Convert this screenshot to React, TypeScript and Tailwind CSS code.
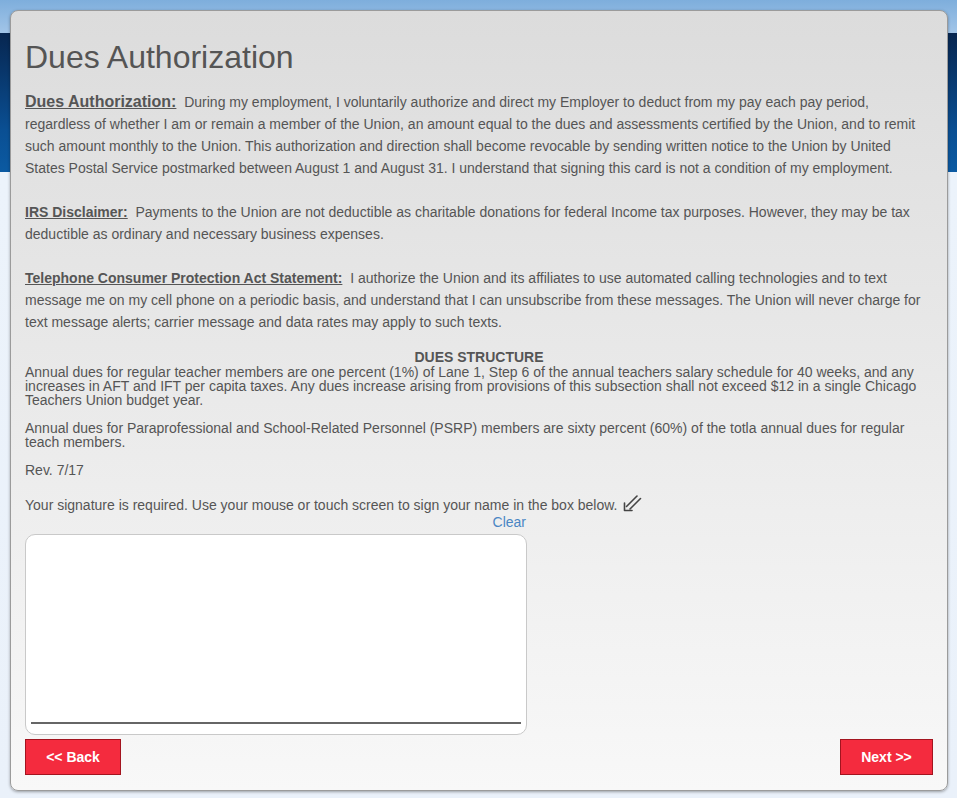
import React from "react";

const font = { fontFamily: '"Liberation Sans", Arial, sans-serif' };

const SignArrow = () => (
  <svg width="20" height="19" viewBox="0 0 20 19" className="ml-[5px] inline-block align-[-3px]" fill="none" stroke="#444" strokeWidth="1.6" strokeLinecap="round" strokeLinejoin="round">
    <path d="M2.5 9 V16.5 H10" />
    <path d="M4.5 12.5 L15 2" />
    <path d="M8 15 L18.5 4.5" />
  </svg>
);

export default function App() {
  return (
    <div
      style={font}
      className="min-h-[798px] w-full bg-[linear-gradient(to_bottom,#7eaedc_0px,#a2c5e8_33px,#072650_33px,#0a4f93_130px,#0b5aa2_172px,#ecf3fb_172px,#eaf1fa_100%)] pt-[10px] pb-[8px]"
    >
      <div className="ml-[10px] w-[938px] rounded-[8px] border border-[#9b9b9b] bg-[linear-gradient(to_bottom,#dcdcdc,#f8f8f8)] px-[14px] pt-[29px] pb-[15px] text-[#555] shadow-[0_1px_3px_rgba(0,0,0,0.35)]">
        <h1 className="text-[32px] leading-[35px] font-normal text-[#555]">Dues Authorization</h1>

        <div className="mt-[16px] text-[14px] leading-[22px]">
          <p>
            <span className="text-[16px] font-bold underline">Dues Authorization:</span>&nbsp; During my employment, I voluntarily authorize and direct my Employer to deduct from my pay each pay period, regardless of whether I am or remain a member of the Union, an amount equal to the dues and assessments certified by the Union, and to remit such amount monthly to the Union. This authorization and direction shall become revocable by sending written notice to the Union by United States Postal Service postmarked between August 1 and August 31. I understand that signing this card is not a condition of my employment.
          </p>
          <p className="mt-[22px]">
            <span className="font-bold underline">IRS Disclaimer:</span>&nbsp; Payments to the Union are not deductible as charitable donations for federal Income tax purposes. However, they may be tax deductible as ordinary and necessary business expenses.
          </p>
          <p className="mt-[22px]">
            <span className="font-bold underline">Telephone Consumer Protection Act Statement:</span>&nbsp; I authorize the Union and its affiliates to use automated calling technologies and to text message me on my cell phone on a periodic basis, and understand that I can unsubscribe from these messages. The Union will never charge for text message alerts; carrier message and data rates may apply to such texts.
          </p>
        </div>

        <div className="mt-[17px] text-[14px] leading-[14px]">
          <div className="text-center leading-[15px] font-bold">DUES STRUCTURE</div>
          <p>
            Annual dues for regular teacher members are one percent (1%) of Lane 1, Step 6 of the annual teachers salary schedule for 40 weeks, and any increases in AFT and IFT per capita taxes. Any dues increase arising from provisions of this subsection shall not exceed $12 in a single Chicago Teachers Union budget year.
          </p>
          <p className="mt-[14px]">
            Annual dues for Paraprofessional and School-Related Personnel (PSRP) members are sixty percent (60%) of the totla annual dues for regular teach members.
          </p>
          <p className="mt-[14px]">Rev. 7/17</p>
        </div>

        <div className="mt-[17px] text-[14px] leading-[20px]">
          Your signature is required. Use your mouse or touch screen to sign your name in the box below.
          <SignArrow />
        </div>

        <div className="w-[502px]">
          <div className="text-right text-[14px] leading-[15px] text-[#4a86c4]">
            <span className="mr-[1px] cursor-pointer">Clear</span>
          </div>
          <div className="mt-[4px] flex h-[201px] flex-col justify-end rounded-[10px] border border-[#c9c9c9] bg-white px-[5px] pb-[10px]">
            <div className="h-[2px] bg-[#666]" />
          </div>
        </div>

        <div className="mt-[4px] flex items-center justify-between">
          <button type="button" className="h-[36px] w-[96px] border border-[#a3141f] bg-[#f42b3e] text-[14px] font-bold text-white">
            &lt;&lt; Back
          </button>
          <button type="button" className="h-[36px] w-[93px] border border-[#a3141f] bg-[#f42b3e] text-[14px] font-bold text-white">
            Next &gt;&gt;
          </button>
        </div>
      </div>
    </div>
  );
}
